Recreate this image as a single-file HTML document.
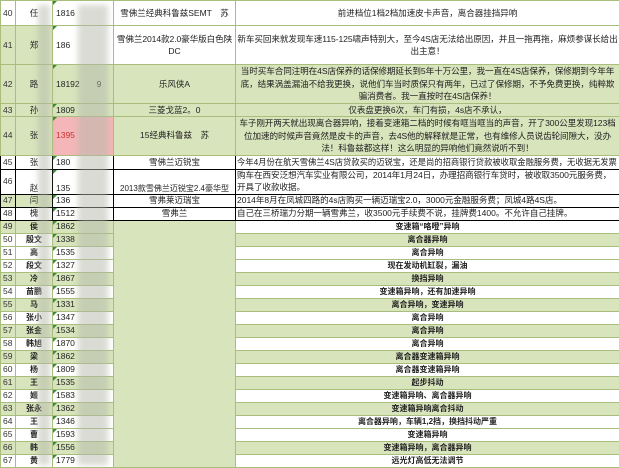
<!DOCTYPE html>
<html><head><meta charset="utf-8"><style>
body{margin:0;width:619px;height:465px;overflow:hidden;background:#fff;font-family:"Liberation Sans","Noto Sans CJK SC",sans-serif;position:relative}
table{border-collapse:collapse;table-layout:fixed;position:absolute;left:0;top:0;width:619px}
td{border:1px solid #a9bd7c;padding:0 1px;font-size:8.5px;line-height:11px;overflow:hidden;white-space:nowrap;color:#222;text-align:center;vertical-align:middle}
td.n{font-size:8.5px;text-align:left;padding-left:2px;color:#333}
td.d{white-space:normal;font-size:8.6px;line-height:12.5px;letter-spacing:-0.1px}
td.p{text-align:left;padding-left:3px;position:relative}
td.p:before{content:"";position:absolute;left:0;top:0;border-top:4px solid #2f8f2f;border-right:4px solid transparent}
.g{background:#d8e4bc}
.b td{border-color:#000}
.bd{font-weight:bold;font-size:8px}
.bl{position:absolute;filter:blur(3px);background:#b4b8aa;opacity:.5}
</style></head><body>
<table>
<col style="width:15px"><col style="width:37px"><col style="width:61px"><col style="width:122px"><col style="width:384px">
<tr style="height:25px"><td class="n">40</td><td>任</td><td class="p">1816</td><td>雪佛兰经典科鲁兹SEMT　苏</td><td>前进档位1档2档加速皮卡声音，离合器挂挡异响</td></tr>
<tr style="height:39px"><td class="n g">41</td><td class="g">郑</td><td class="p">186</td><td class="d">雪佛兰2014款2.0豪华版白色陕DC</td><td class="d">新车买回来就发现车速115-125啸声特别大，至今4S店无法给出原因，并且一拖再拖，麻烦参谋长给出出主意！</td></tr>
<tr style="height:39px" class="g"><td class="n">42</td><td>路</td><td class="p">18192　　9</td><td>乐风侠A</td><td class="d">当时买车合同注明在4S店保养的话保修期延长到5年十万公里，我一直在4S店保养，保修期到今年年底，结果涡盖漏油不给我更换，说他们车当时质保只有两年，已过了保修期，不予免费更换，纯粹欺骗消费者。我一直按时在4S店保养！</td></tr>
<tr style="height:13px" class="g"><td class="n">43</td><td>孙</td><td class="p">1809</td><td>三菱戈蓝2。0</td><td>仅表盘更换6次，车门有损，4s店不承认，</td></tr>
<tr style="height:38px" class="g"><td class="n">44</td><td>张</td><td class="p" style="background:#f4b6b8;color:#c33">1395</td><td>15经典科鲁兹　苏</td><td class="d">车子刚开两天就出现离合器异响，接着变速箱二档的时候有哐当哐当的声音，开了300公里发现123档位加速的时候声音竟然是皮卡的声音，去4S他的解释就是正常，也有维修人员说齿轮间隙大，没办法！科鲁兹都这样！这么明显的异响他们竟然说听不到！</td></tr>
<tr style="height:14px" class="b"><td class="n">45</td><td>张</td><td class="p">180</td><td>雪佛兰迈锐宝</td><td style="text-align:left;font-size:8.3px">今年4月份在航天雪佛兰4S店贷款买的迈锐宝，还是尚的招商银行贷款被收取金融服务费，无收据无发票</td></tr>
<tr style="height:25px" class="b"><td class="n">46</td><td style="vertical-align:bottom">赵</td><td class="p" style="vertical-align:bottom">135</td><td style="vertical-align:bottom;font-size:8px">2013款雪佛兰迈锐宝2.4豪华型</td><td class="d" style="text-align:left;line-height:11.5px">购车在西安泛想汽车实业有限公司，2014年1月24日，办理招商银行车贷时，被收取3500元服务费，开具了收款收据。</td></tr>
<tr style="height:13px" class="b"><td class="n g">47</td><td class="g">闫</td><td class="p">136</td><td>雪弗莱迈瑞宝</td><td style="text-align:left">2014年8月在凤城四路的4s店购买一辆迈瑞宝2.0，3000元金融服务费；凤城4路4S店。</td></tr>
<tr style="height:13px" class="b"><td class="n">48</td><td>槐</td><td class="p">1512</td><td>雪弗兰</td><td style="text-align:left">自己在三桥瑞力分期一辆雪弗兰，收3500元手续费不说，挂牌费1400。不允许自己挂牌。</td></tr>
<tr style="height:13px"><td class="n g">49</td><td class="bd g">侯</td><td class="p g">1862</td><td class="g" rowspan="19"></td><td class="bd">变速箱“咯噔”异响</td></tr>
<tr style="height:13px"><td class="n">50</td><td class="bd">殷文</td><td class="p g">1338</td><td class="bd g">离合器异响</td></tr>
<tr style="height:13px"><td class="n">51</td><td class="bd">高</td><td class="p">1535</td><td class="bd">离合异响</td></tr>
<tr style="height:13px"><td class="n">52</td><td class="bd">段文</td><td class="p">1327</td><td class="bd">现在发动机缸裂，漏油</td></tr>
<tr style="height:13px" class="g"><td class="n">53</td><td class="bd">冷</td><td class="p">1867</td><td class="bd">换挡异响</td></tr>
<tr style="height:13px"><td class="n">54</td><td class="bd">苗鹏</td><td class="p">1555</td><td class="bd">变速箱异响，还有加速异响</td></tr>
<tr style="height:13px" class="g"><td class="n">55</td><td class="bd">马</td><td class="p">1331</td><td class="bd">离合异响，变速异响</td></tr>
<tr style="height:13px"><td class="n">56</td><td class="bd">张小</td><td class="p">1347</td><td class="bd">离合异响</td></tr>
<tr style="height:13px" class="g"><td class="n">57</td><td class="bd">张金</td><td class="p">1534</td><td class="bd">离合异响</td></tr>
<tr style="height:13px"><td class="n">58</td><td class="bd">韩旭</td><td class="p">1870</td><td class="bd">离合异响</td></tr>
<tr style="height:13px" class="g"><td class="n">59</td><td class="bd">梁</td><td class="p">1862</td><td class="bd">离合器变速箱异响</td></tr>
<tr style="height:13px"><td class="n">60</td><td class="bd">杨</td><td class="p">1809</td><td class="bd">离合器变速箱异响</td></tr>
<tr style="height:13px" class="g"><td class="n">61</td><td class="bd">王</td><td class="p">1535</td><td class="bd">起步抖动</td></tr>
<tr style="height:13px"><td class="n">62</td><td class="bd">姬</td><td class="p">1583</td><td class="bd">变速箱异响、离合器异响</td></tr>
<tr style="height:13px" class="g"><td class="n">63</td><td class="bd">张永</td><td class="p">1362</td><td class="bd">变速箱异响离合抖动</td></tr>
<tr style="height:13px"><td class="n">64</td><td class="bd">王</td><td class="p">1346</td><td class="bd">离合器异响，车辆1,2挡，换挡抖动严重</td></tr>
<tr style="height:13px"><td class="n">65</td><td class="bd">曹</td><td class="p">1593</td><td class="bd">变速箱异响</td></tr>
<tr style="height:13px" class="g"><td class="n">66</td><td class="bd">韩</td><td class="p">1556</td><td class="bd">变速箱异响，离合器异响</td></tr>
<tr style="height:13px"><td class="n">67</td><td class="bd">黄</td><td class="p">1779</td><td class="bd">远光灯高低无法调节</td></tr>
</table>
<div class="bl" style="left:38px;top:5px;width:12px;height:460px"></div>
<div class="bl" style="left:78px;top:5px;width:30px;height:460px"></div>
</body></html>
